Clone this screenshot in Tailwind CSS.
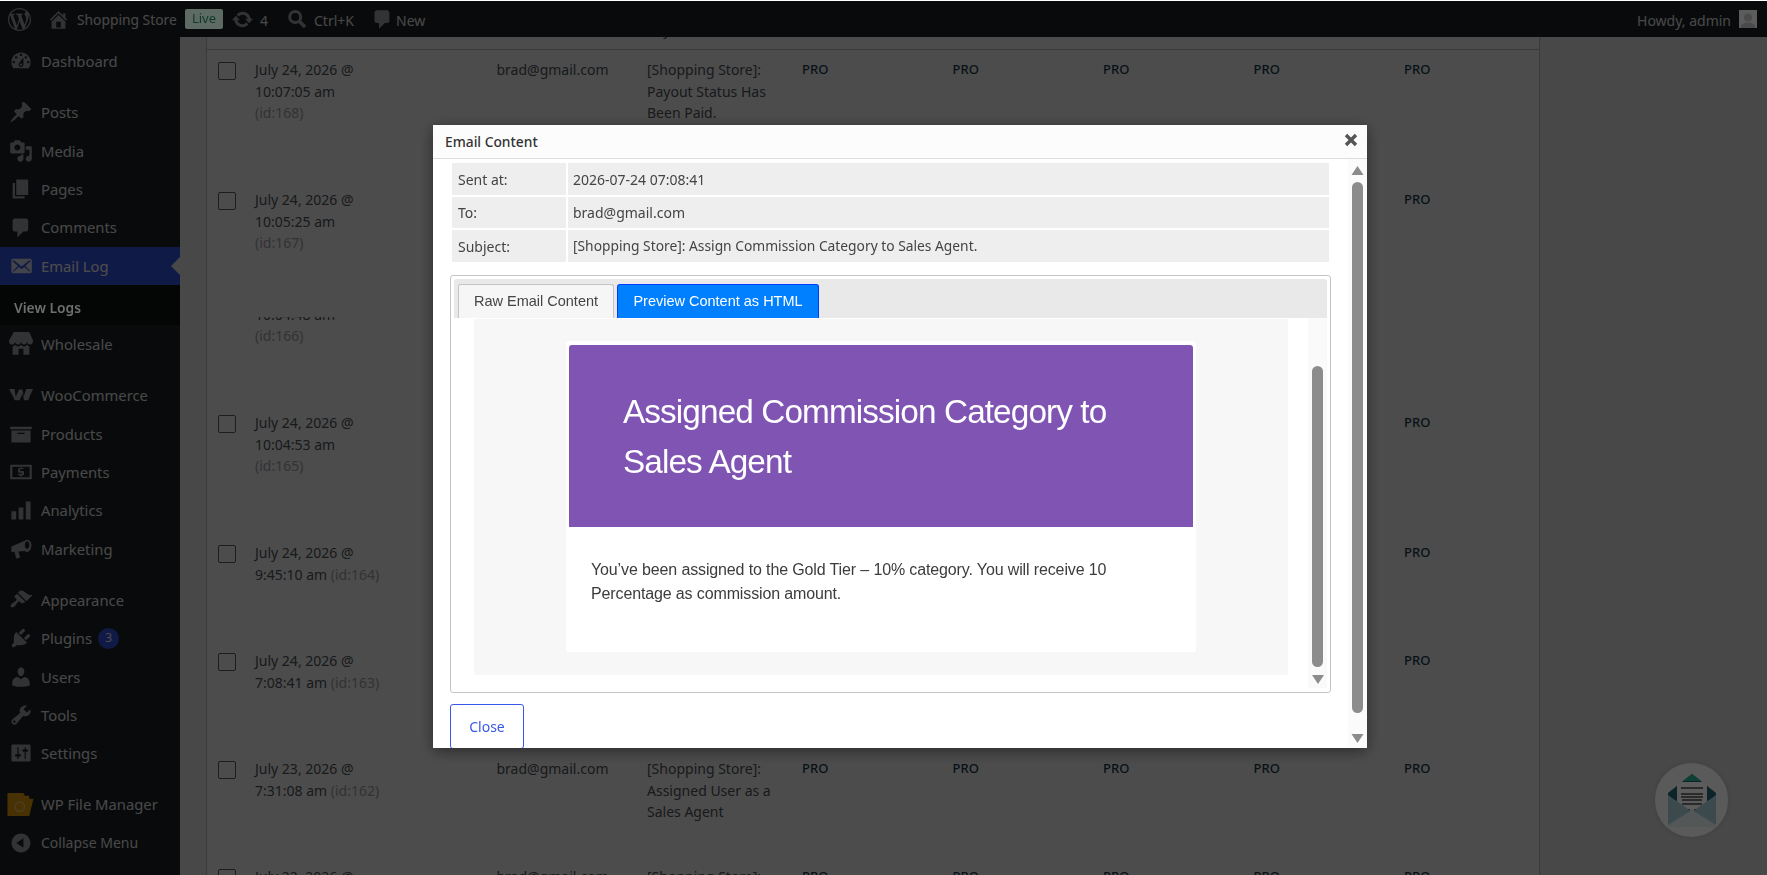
<!DOCTYPE html>
<html lang="en">
<head>
  <meta charset="UTF-8" />
  <title>Email Log</title>
  <script src="https://cdn.jsdelivr.net/npm/@tailwindcss/browser@4"></script>
</head>
<body class="h-[875px] overflow-hidden bg-[#f0f0f1] font-['Noto_Sans',sans-serif]">
  <div class="h-px bg-white"></div>

  <!-- Admin bar -->
  <header class="h-[36px] bg-[#1d2327] flex items-center text-[#f0f0f1] text-[14px]">
    <svg class="w-[23px] h-[23px] ml-[8px] fill-[#a7aaad]" viewBox="0 0 20 20"><path d="M20 10c0-5.51-4.49-10-10-10C4.48 0 0 4.49 0 10c0 5.52 4.48 10 10 10 5.51 0 10-4.48 10-10zM7.78 15.37L4.37 6.22c.55-.02 1.17-.08 1.17-.08.5-.06.44-1.13-.06-1.11 0 0-1.45.11-2.37.11-.18 0-.37 0-.58-.01C4.12 2.69 6.87 1.11 10 1.11c2.33 0 4.45.87 6.05 2.34-.68-.11-1.65.39-1.65 1.58 0 .74.45 1.36.9 2.1.35.61.55 1.36.55 2.46 0 1.49-1.4 5-1.4 5l-3.03-8.37c.54-.02.82-.17.82-.17.5-.05.44-1.25-.06-1.22 0 0-1.44.12-2.38.12-.87 0-2.33-.12-2.33-.12-.5-.03-.56 1.2-.06 1.22l.92.08 1.26 3.41zM17.41 10c.24-.64.74-1.87.43-4.25.7 1.29 1.05 2.71 1.05 4.25 0 3.29-1.73 6.24-4.4 7.78.97-2.59 1.94-5.2 2.92-7.78zM6.1 18.09C3.12 16.65 1.11 13.53 1.11 10c0-1.3.23-2.48.72-3.59C3.25 10.3 4.67 14.2 6.1 18.09zm4.03-6.63l2.58 6.98c-.86.29-1.76.45-2.71.45-.79 0-1.57-.11-2.29-.33.81-2.38 1.62-4.74 2.42-7.1z"/></svg>
    <svg class="w-[23px] h-[23px] ml-[16px] fill-[#a7aaad]" viewBox="0 0 20 20"><path d="M16 8.5l1.53 1.53-1.06 1.06L10 4.62l-6.47 6.47-1.06-1.06L10 2.5l4 4v-2h2v4zm-6-2.46l6 5.99V18H4v-5.97zM12 17v-5H8v5h4z"/></svg>
    <span class="ml-[7px] pt-[2px] w-[99px] whitespace-nowrap text-[13.8px]">Shopping Store</span>
    <span class="relative z-[15] ml-[9px] w-[38px] h-[20px] rounded-[2px] bg-[#5e6b64] text-[#0e3a2a] flex items-center justify-center text-[13px]">Live</span>
    <svg class="w-[23px] h-[23px] ml-[8px] fill-[#a7aaad]" viewBox="0 0 20 20"><path d="M10.2 3.28c3.53 0 6.43 2.61 6.92 6h2.08l-3.5 4-3.5-4h2.32c-.45-1.97-2.21-3.45-4.32-3.45-1.45 0-2.73.71-3.54 1.78L4.95 5.66C6.23 4.2 8.11 3.28 10.2 3.28zm-.4 13.44c-3.52 0-6.43-2.61-6.92-6H.8l3.5-4c1.17 1.33 2.33 2.67 3.5 4H5.48c.45 1.97 2.21 3.45 4.32 3.45 1.45 0 2.73-.71 3.54-1.78l1.71 1.95c-1.28 1.46-3.15 2.38-5.25 2.38z"/></svg>
    <span class="ml-[6px] pt-[2px] w-[9px]">4</span>
    <svg class="w-[20px] h-[20px] ml-[18px] stroke-[#a7aaad] fill-none" viewBox="0 0 20 20"><circle cx="8.2" cy="8" r="5.5" stroke-width="3"/><path d="M12.5 12.5L18 18" stroke-width="3.6"/></svg>
    <span class="ml-[7px] pt-[2px] w-[41px] whitespace-nowrap">Ctrl+K</span>
    <svg class="w-[23px] h-[23px] ml-[16px] fill-[#a7aaad]" viewBox="0 0 20 20"><path d="M5 2h9c1.1 0 2 .9 2 2v7c0 1.1-.9 2-2 2h-2l-5 5v-5H5c-1.1 0-2-.9-2-2V4c0-1.1.9-2 2-2z"/></svg>
    <span class="ml-[2px] pt-[2px]">New</span>
    <span class="ml-auto pt-[2px]">Howdy, admin</span>
    <span class="relative z-[15] ml-[8px] mr-[10px] w-[18px] h-[18px] bg-[#5c5c5c] flex items-end justify-center overflow-hidden">
      <svg class="w-[16px] h-[16px] fill-[#4b4b4b]" viewBox="0 0 20 20"><circle cx="10" cy="7" r="5"/><path d="M1 20c0-5 4-7 9-7s9 2 9 7z"/></svg>
    </span>
  </header>

  <div class="flex h-[838px]">
    <!-- Sidebar -->
    <nav id="sidebar" class="w-[180px] shrink-0 bg-[#1d2327] pt-[5.2px] text-[14.8px] text-[#f0f0f1]"></nav>

    <!-- Log table -->
    <main class="flex-1 pl-[26px] overflow-hidden">
      <div id="log-table" class="w-[1334px] min-h-[838px] bg-white border-x border-[#c3c4c7] text-[14px] leading-[21.6px] text-[#50575e]"></div>
    </main>
  </div>

  <!-- Dimmed backdrop -->
  <div class="fixed inset-x-0 top-px bottom-0 bg-black/70 z-10"></div>

  <!-- Floating mail button -->
  <div class="fixed left-[1655px] top-[763px] w-[73px] h-[74px] rounded-full bg-[#5a5a5a] shadow-[0_0_8px_rgba(0,0,0,0.12)] z-[15] flex items-center justify-center">
    <svg class="w-[50px] h-[54px]" viewBox="0 0 50 54">
      <path d="M1 20L25 1l24 19v32H1z" fill="#0c2329"/>
      <path d="M16 8L25 1l9 7z" fill="#0f4034"/>
      <rect x="10" y="9" width="30" height="34" fill="#5c5c5c"/>
      <path d="M14 15h22M14 21h22M14 24h22M15 27h20M15 31h20M17 37h6M27 37h6" stroke="#1b1b1b" stroke-width="1.4"/>
      <path d="M1 22l24 17 24-17v30l-2 2H3l-2-2z" fill="#3c4a4d"/>
      <path d="M1 52l24-15 24 15v1l-1 1H2l-1-1z" fill="#535757"/>
    </svg>
  </div>

  <!-- Email dialog -->
  <section class="fixed left-[433px] top-[125px] w-[934px] h-[623px] bg-white z-20 overflow-hidden flex flex-col shadow-[0_3px_14px_rgba(0,0,0,0.45)] text-[#444] text-[14px]">
    <div class="h-[34px] shrink-0 bg-[#fcfcfc] border-b border-[#dddddd] flex items-center justify-between pl-[12px] pr-[9px]">
      <h2 class="text-[#333] text-[13.8px] font-medium pt-[2px]">Email Content</h2>
      <svg class="w-[14px] h-[14px] stroke-[#555] mb-[3px]" viewBox="0 0 14 14"><path d="M2 2l10 10M12 2L2 12" stroke-width="3.4"/></svg>
    </div>

    <div class="flex-1 flex min-h-0">
      <div class="w-[915px] pl-[17px] pt-[4px]">
        <div class="ml-[2px] w-[877px] grid grid-cols-[114px_1fr] gap-[2px]">
          <div class="h-[32px] bg-[#eeeeee] pl-[6px] flex items-center">Sent at:</div>
          <div class="h-[32px] bg-[#eeeeee] pl-[5px] flex items-center">2026-07-24 07:08:41</div>
          <div class="h-[31px] bg-[#eeeeee] pl-[6px] flex items-center">To:</div>
          <div class="h-[31px] bg-[#eeeeee] pl-[5px] flex items-center">brad@gmail.com</div>
          <div class="h-[32px] bg-[#eeeeee] pl-[6px] flex items-center">Subject:</div>
          <div class="h-[32px] bg-[#eeeeee] pl-[5px] flex items-center text-[13.8px]">[Shopping Store]: Assign Commission Category to Sales Agent.</div>
        </div>

        <div class="mt-[13px] w-[881px] h-[418px] border border-[#c5c5c5] rounded-[3px] p-[3px] flex flex-col font-['Liberation_Sans',sans-serif]">
          <div class="h-[39px] shrink-0 bg-[#e9e9e9] rounded-t-[3px] flex items-end pl-[4px] gap-[3px] text-[14.5px]">
            <button class="w-[156px] h-[34px] bg-[#f6f6f6] border border-b-0 border-[#c5c5c5] rounded-t-[3px] text-[#454545]">Raw Email Content</button>
            <button class="w-[202px] h-[34px] bg-[#007fff] border border-b-0 border-[#003eff] rounded-t-[3px] text-white">Preview Content as HTML</button>
          </div>
          <div class="flex-1 flex min-h-0">
            <div class="ml-[20px] mt-px w-[814px] h-[356px] bg-[#f7f7f7] pl-[92px] pt-[22px]">
              <div class="w-[630px] h-[311px] bg-white rounded-[3px] pt-[4px] px-[3px]">
                <div class="w-[624px] h-[182px] bg-[#7f54b3] rounded-t-[3px] pl-[54px] pt-[42px] pr-[40px] text-white text-[33.33px] leading-[50px] tracking-[-0.9px]">Assigned Commission Category to Sales Agent</div>
                <p class="mt-[31px] pl-[22px] pr-[40px] text-[16px] leading-[24px] tracking-[-0.13px] text-[#3c3c3c]">You’ve been assigned to the Gold Tier – 10% category. You will receive 10 Percentage as commission amount.</p>
              </div>
            </div>
            <!-- inner scrollbar -->
            <div class="ml-[20px] w-[19px] h-[370px] bg-[#fafafa] flex flex-col items-center">
              <div class="mt-[48px] w-[11px] h-[301px] bg-[#8c8c8c] rounded-full"></div>
              <svg class="mt-[8px] w-[12px] h-[9px] fill-[#8c8c8c]" viewBox="0 0 12 9"><path d="M0 0h12L6 9z"/></svg>
            </div>
          </div>
        </div>

        <button class="mt-[11px] w-[74px] h-[45px] border border-[#3858e9] rounded-[3px] text-[#3858e9]">Close</button>
      </div>

      <!-- outer scrollbar -->
      <div class="w-[19px] bg-[#fbfbfb] flex flex-col items-center pt-[7px]">
        <svg class="w-[13px] h-[9px] fill-[#8c8c8c]" viewBox="0 0 12 9"><path d="M6 0l6 9H0z"/></svg>
        <div class="mt-[7px] w-[11px] h-[531px] bg-[#8c8c8c] rounded-full"></div>
        <svg class="mt-[21px] w-[13px] h-[9px] fill-[#8c8c8c]" viewBox="0 0 12 9"><path d="M0 0h12L6 9z"/></svg>
      </div>
    </div>
  </section>

  <script>
    const icons = {
      dashboard: '<path fill-rule="evenodd" d="M3.76 16h12.48c1.1-1.37 1.76-3.11 1.76-5 0-4.42-3.58-8-8-8s-8 3.58-8 8c0 1.89.66 3.63 1.76 5zM10 4c.55 0 1 .45 1 1s-.45 1-1 1-1-.45-1-1 .45-1 1-1zM6 6c.55 0 1 .45 1 1s-.45 1-1 1-1-.45-1-1 .45-1 1-1zm8 0c.55 0 1 .45 1 1s-.45 1-1 1-1-.45-1-1 .45-1 1-1zm-5.37 5.55L12 7v6c0 1.1-.9 2-2 2s-2-.9-2-2c0-.57.24-1.08.63-1.45zM4 10c.55 0 1 .45 1 1s-.45 1-1 1-1-.45-1-1 .45-1 1-1zm12 0c.55 0 1 .45 1 1s-.45 1-1 1-1-.45-1-1 .45-1 1-1zm-5 3c0-.55-.45-1-1-1s-1 .45-1 1 .45 1 1 1 1-.45 1-1z"/>',
      posts: '<path d="M10.44 3.02l1.82-1.82 6.36 6.35-1.83 1.82c-1.05-.68-2.48-.57-3.41.36l-.75.75c-.92.93-1.04 2.35-.35 3.41l-1.83 1.82-2.41-2.41-2.8 2.79c-.42.42-3.38 2.71-3.8 2.29s1.86-3.39 2.28-3.81l2.79-2.79L4.1 9.36l1.83-1.82c1.05.69 2.48.57 3.4-.36l.75-.75c.93-.92 1.05-2.35.36-3.41z"/>',
      media: '<path fill-rule="evenodd" d="M13 11V4c0-.55-.45-1-1-1h-1.67L9 1H5L3.67 3H2c-.55 0-1 .45-1 1v7c0 .55.45 1 1 1h10c.55 0 1-.45 1-1zM7 4.5c1.38 0 2.5 1.12 2.5 2.5S8.38 9.5 7 9.5 4.5 8.38 4.5 7 5.62 4.5 7 4.5zM14 6h5v10.5c0 1.38-1.12 2.5-2.5 2.5S14 17.88 14 16.5s1.12-2.5 2.5-2.5c.17 0 .34.02.5.05V9h-3V6zm-4 8.05V13h2v3.5c0 1.38-1.12 2.5-2.5 2.5S7 17.88 7 16.5 8.12 14 9.5 14c.17 0 .34.02.5.05z"/>',
      pages: '<path d="M6 15V2h10v13H6zm-1 1h8v2H3V5h2v11z"/>',
      comments: '<path d="M5 2h9c1.1 0 2 .9 2 2v7c0 1.1-.9 2-2 2h-2l-5 5v-5H5c-1.1 0-2-.9-2-2V4c0-1.1.9-2 2-2z"/>',
      email: '<path fill-rule="evenodd" d="M19 14.5v-9c0-.83-.67-1.5-1.5-1.5H3.49c-.83 0-1.5.67-1.5 1.5v9c0 .83.67 1.5 1.5 1.5H17.5c.83 0 1.5-.67 1.5-1.5zm-1.31-9.11c.33.33.15.67-.03.84L13.6 9.95l3.9 4.06c.12.14.2.36.06.51-.13.16-.43.15-.56.05l-4.37-3.73-2.14 1.95-2.13-1.95-4.37 3.73c-.13.1-.43.11-.56-.05-.14-.15-.06-.37.06-.51l3.9-4.06-4.06-3.72c-.18-.17-.36-.51-.03-.84s.67-.17.95.07l6.24 5.04 6.25-5.04c.28-.24.62-.4.95-.07z"/>',
      store: '<path d="M1 10c.41.29.96.43 1.5.43.55 0 1.09-.14 1.5-.43.62-.46 1-1.17 1-2 0 .83.37 1.54 1 2 .41.29.96.43 1.5.43.55 0 1.09-.14 1.5-.43.62-.46 1-1.17 1-2 0 .83.37 1.54 1 2 .41.29.96.43 1.51.43.54 0 1.08-.14 1.49-.43.62-.46 1-1.17 1-2 0 .83.37 1.54 1 2 .41.29.96.43 1.5.43.55 0 1.09-.14 1.5-.43.63-.46 1-1.17 1-2V7l-3-7H4L0 7v1c0 .83.37 1.54 1 2zm2 8.99h5v-5h4v5h5v-7c-.37-.05-.72-.22-1-.43-.63-.45-1-.73-1-1.56 0 .83-.38 1.11-1 1.56-.41.3-.95.43-1.49.44-.55 0-1.1-.14-1.51-.44-.63-.45-1-.73-1-1.56 0 .83-.38 1.11-1 1.56-.41.3-.95.43-1.5.44-.54 0-1.09-.14-1.5-.44-.63-.45-1-.73-1-1.57 0 .84-.38 1.12-1 1.57-.29.21-.63.38-1 .44v6.99z"/>',
      woo: '<path d="M0 5h4.6l1 6.4L8.4 5.4h2.8l1 6 2.2-6.4H20c-1.4 3-2.6 5.8-4 9.4h-3.4l-1.3-5.4-2.6 5.4H4.8C3.4 11 1.6 8.2 0 5z"/>',
      products: '<path fill-rule="evenodd" d="M19 4v2H1V4h18zM2 7h16v10H2V7zm11 3V9H7v1h6z"/>',
      payments: '<path fill-rule="evenodd" d="M1.5 4h17c.3 0 .5.2.5.5v11c0 .3-.2.5-.5.5h-17c-.3 0-.5-.2-.5-.5v-11c0-.3.2-.5.5-.5zM2.8 5.6v8.8h14.4V5.6z"/><path d="M12.3 7.4H9.2v1.7h2.6c.4 0 .7.3.7.7v2.3c0 .4-.3.7-.7.7h-1.1v1h-1.4v-1H7.6v-1.4h3.3V10.6H8.3c-.4 0-.7-.3-.7-.7V7.6c0-.4.3-.7.7-.7h1v-.9h1.4v.9h1.6z"/>',
      analytics: '<path d="M2 11h4v7H2zM8 8h4v10H8zM14 3h4v15h-4z"/>',
      marketing: '<path fill-rule="evenodd" d="M18.7 6.4c0-2.3-1.7-4.2-3.6-4.2-.8 0-1.5.3-2 .9L2 8v4.5l2.6-.2L6 18l3.2-.8-1.2-5.2 5.1-.4c.5.5 1.2.8 2 .8 1.9 0 3.6-2 3.6-5.9zm-3.6 3.4c-1 0-1.9-1.4-1.9-3.2s.9-3.1 1.9-3.1 1.9 1.4 1.9 3.1-.9 3.2-1.9 3.2z"/>',
      appearance: '<path d="M14.48 11.06L7.41 3.99l1.5-1.5c.5-.56 2.3-.47 3.51.32 1.21.8 1.43 1.28 2.91 2.1 1.18.64 2.45 1.26 4.45.85zm-.71.71L6.7 4.7 4.93 6.47c-.39.39-.39 1.02 0 1.41l1.06 1.06c.39.39.39 1.03 0 1.42-.6.6-1.43 1.11-2.21 1.69-.35.26-.7.53-1.01.84C1.43 13.71.96 15.12 1.67 15.83c.7.71 2.12.24 3.43-1.07.31-.31.58-.66.85-1.01.57-.78 1.08-1.61 1.69-2.21.39-.39 1.02-.39 1.41 0l1.06 1.06c.39.39 1.02.39 1.41 0z"/>',
      plugins: '<path d="M13.11 4.36L9.87 7.6 8 5.73l3.24-3.24c.35-.34 1.05-.2 1.56.32.52.51.66 1.21.31 1.55zm-8 1.77l.91-1.12 9.01 9.01-1.19.84c-.71.71-2.63 1.16-3.82 1.16H6.14L4.9 17.26c-.59.59-1.54.59-2.12 0-.59-.58-.59-1.53 0-2.12l1.24-1.24v-3.88c0-1.13.4-3.19 1.09-3.89zm7.26 3.97l3.24-3.24c.34-.35 1.04-.21 1.55.31.52.51.66 1.21.31 1.55l-3.24 3.25z"/>',
      users: '<path d="M10 9.25c-2.27 0-2.73-3.44-2.73-3.44C7 4.02 7.82 2 9.97 2c2.16 0 2.98 2.02 2.71 3.81 0 0-.41 3.44-2.68 3.44zm0 2.57L12.72 10c2.39 0 4.52 2.33 4.52 4.53v2.49s-3.65 1.13-7.24 1.13c-3.65 0-7.24-1.13-7.24-1.13v-2.49c0-2.25 1.94-4.48 4.47-4.48z"/>',
      tools: '<path fill-rule="evenodd" d="M16.68 9.77c-1.34 1.34-3.3 1.67-4.95.99l-5.41 6.52c-.99.99-2.59.99-3.58 0s-.99-2.59 0-3.57l6.52-5.42c-.68-1.65-.35-3.61.99-4.95 1.28-1.28 3.12-1.62 4.72-1.06l-2.89 2.89 2.82 2.82 2.86-2.87c.53 1.58.18 3.39-1.08 4.65zM3.81 16.21c.4.39 1.04.39 1.43 0 .4-.4.4-1.04 0-1.43-.39-.4-1.03-.4-1.43 0-.39.39-.39 1.03 0 1.43z"/>',
      settings: '<path fill-rule="evenodd" d="M18 16V4c0-.55-.45-1-1-1H3c-.55 0-1 .45-1 1v12c0 .55.45 1 1 1h14c.55 0 1-.45 1-1zM8 11h1c.55 0 1 .45 1 1s-.45 1-1 1H8v1.5c0 .28-.22.5-.5.5s-.5-.22-.5-.5V13H6c-.55 0-1-.45-1-1s.45-1 1-1h1V5.5c0-.28.22-.5.5-.5s.5.22.5.5V11zm5-2h-1c-.55 0-1-.45-1-1s.45-1 1-1h1V5.5c0-.28.22-.5.5-.5s.5.22.5.5V7h1c.55 0 1 .45 1 1s-.45 1-1 1h-1v5.5c0 .28-.22.5-.5.5s-.5-.22-.5-.5V9z"/>',
      folder: '<path d="M1 2h11l1 2h3v2h3l-3 12H1z" fill="#f0a40a"/><circle cx="9.5" cy="11.5" r="3.2" fill="none" stroke="#ffd27a" stroke-width="1"/>',
      collapse: '<path fill-rule="evenodd" d="M10 2.16c4.33 0 7.84 3.51 7.84 7.84s-3.51 7.84-7.84 7.84S2.16 14.33 2.16 10 5.71 2.16 10 2.16zm2 11.72V6.12L6.18 9.97z"/>'
    };

    // gap = separator above the item
    const menu = [
      { label: 'Dashboard', icon: 'dashboard' },
      { label: 'Posts', icon: 'posts', gap: true },
      { label: 'Media', icon: 'media' },
      { label: 'Pages', icon: 'pages' },
      { label: 'Comments', icon: 'comments' },
      { label: 'Email Log', icon: 'email', active: true },
      { label: 'Wholesale', icon: 'store' },
      { label: 'WooCommerce', icon: 'woo', gap: true },
      { label: 'Products', icon: 'products' },
      { label: 'Payments', icon: 'payments' },
      { label: 'Analytics', icon: 'analytics' },
      { label: 'Marketing', icon: 'marketing' },
      { label: 'Appearance', icon: 'appearance', gap: true },
      { label: 'Plugins', icon: 'plugins', badge: '3' },
      { label: 'Users', icon: 'users' },
      { label: 'Tools', icon: 'tools' },
      { label: 'Settings', icon: 'settings' },
      { label: 'WP File Manager', icon: 'folder', gap: true, big: true },
      { label: 'Collapse Menu', icon: 'collapse', small: true }
    ];

    document.getElementById('sidebar').innerHTML = menu.map(item => `
      ${item.gap ? '<div class="h-[12.6px]"></div>' : ''}
      <a class="relative h-[38.4px] flex items-center ${item.active ? 'bg-[#3858e9] text-white' : ''}">
        <span class="w-[41px] flex justify-center shrink-0">
          <svg class="${item.big ? 'w-[29px] h-[29px]' : 'w-[24px] h-[24px]'} ${item.active ? 'fill-[#dfe3f5]' : 'fill-[#a7aaad]'}" viewBox="0 0 20 20">${icons[item.icon]}</svg>
        </span>
        <span class="${item.small ? 'text-[14px]' : ''}">${item.label}</span>
        ${item.badge ? `<span class="ml-[6px] w-[21px] h-[21px] rounded-full bg-[#3858e9] text-white text-[12px] flex items-center justify-center">${item.badge}</span>` : ''}
        ${item.active ? '<span class="absolute right-0 top-1/2 -mt-[9px] border-y-[9px] border-y-transparent border-r-[9px] border-r-[#f0f0f1]"></span>' : ''}
      </a>
      ${item.active ? '<div class="h-[40px] bg-[#101517] pl-[14px] pt-[7px] flex items-center font-semibold text-[13.8px]"><span class="relative z-[15] text-[#6e6e6e]">View Logs</span></div>' : ''}
    `).join('');

    const rows = [
      { date: 'July 24, 2026 @', time: '10:07:05 am', id: 168, stack: true, subject: '[Shopping Store]: Payout Status Has Been Paid.', h: 130 },
      { date: 'July 24, 2026 @', time: '10:05:25 am', id: 167, stack: true, subject: '[Shopping Store]: Assign Commission Category', h: 130 },
      { date: 'July 24, 2026 @', time: '10:04:48 am', id: 166, stack: true, subject: '', h: 93, seam: true },
      { date: 'July 24, 2026 @', time: '10:04:53 am', id: 165, stack: true, subject: '[Shopping Store]: Assigned User as a Sales Agent', h: 130 },
      { date: 'July 24, 2026 @', time: '9:45:10 am', id: 164, subject: '[Shopping Store]: Payout Status Has Been Paid.', h: 108 },
      { date: 'July 24, 2026 @', time: '7:08:41 am', id: 163, subject: '[Shopping Store]: Assign Commission Category to Sales Agent.', h: 108 },
      { date: 'July 23, 2026 @', time: '7:31:08 am', id: 162, subject: '[Shopping Store]: Assigned User as a Sales Agent', h: 108 },
      { date: 'July 22, 2026 @', time: '7:31:08 am', id: 161, subject: '[Shopping Store]: Assigned User as a Sales Agent', h: 108 }
    ];

    const pro = '<div class="font-medium text-[13px] text-[#173f50]">PRO</div>';

    function rowCells(r) {
      const idTag = `<span class="text-[#a7aaad]">(id:${r.id})</span>`;
      return `
        <div class="pl-[11px] pt-[3px]"><span class="block w-[18px] h-[18px] border border-[#5f6368] rounded-[2px] bg-white"></span></div>
        <div>${r.date}<br>${r.time}${r.stack ? '<br>' : ' '}${idTag}</div>
        <div>brad@gmail.com</div>
        <div class="pr-[24px]">${r.subject}</div>
        ${pro}${pro}${pro}${pro}${pro}`;
    }

    const columns = 'grid grid-cols-[48px_241.5px_150.5px_155px_150.5px_150.5px_150.5px_150.5px_135px]';
    document.getElementById('log-table').innerHTML = `
      <div class="h-[13px] pt-[1px] overflow-hidden border-b border-[#c3c4c7]">
        <div class="${columns} -mt-[19px]">
          <div class="pl-[11px]"><span class="block w-[18px] h-[18px] border border-[#5f6368] rounded-[2px]"></span></div>
          <div></div><div></div><div>Pay</div>
        </div>
      </div>` + rows.map(r => r.seam ? `
      <div class="overflow-hidden pt-[7px]" style="height:${r.h}px">
        <div class="h-full overflow-hidden"><div class="${columns} -mt-[44px] pt-[9px]">${rowCells(r)}</div></div>
      </div>` : `
      <div class="${columns} pt-[9px]" style="height:${r.h}px">${rowCells(r)}</div>`).join('');
  </script>
</body>
</html>
